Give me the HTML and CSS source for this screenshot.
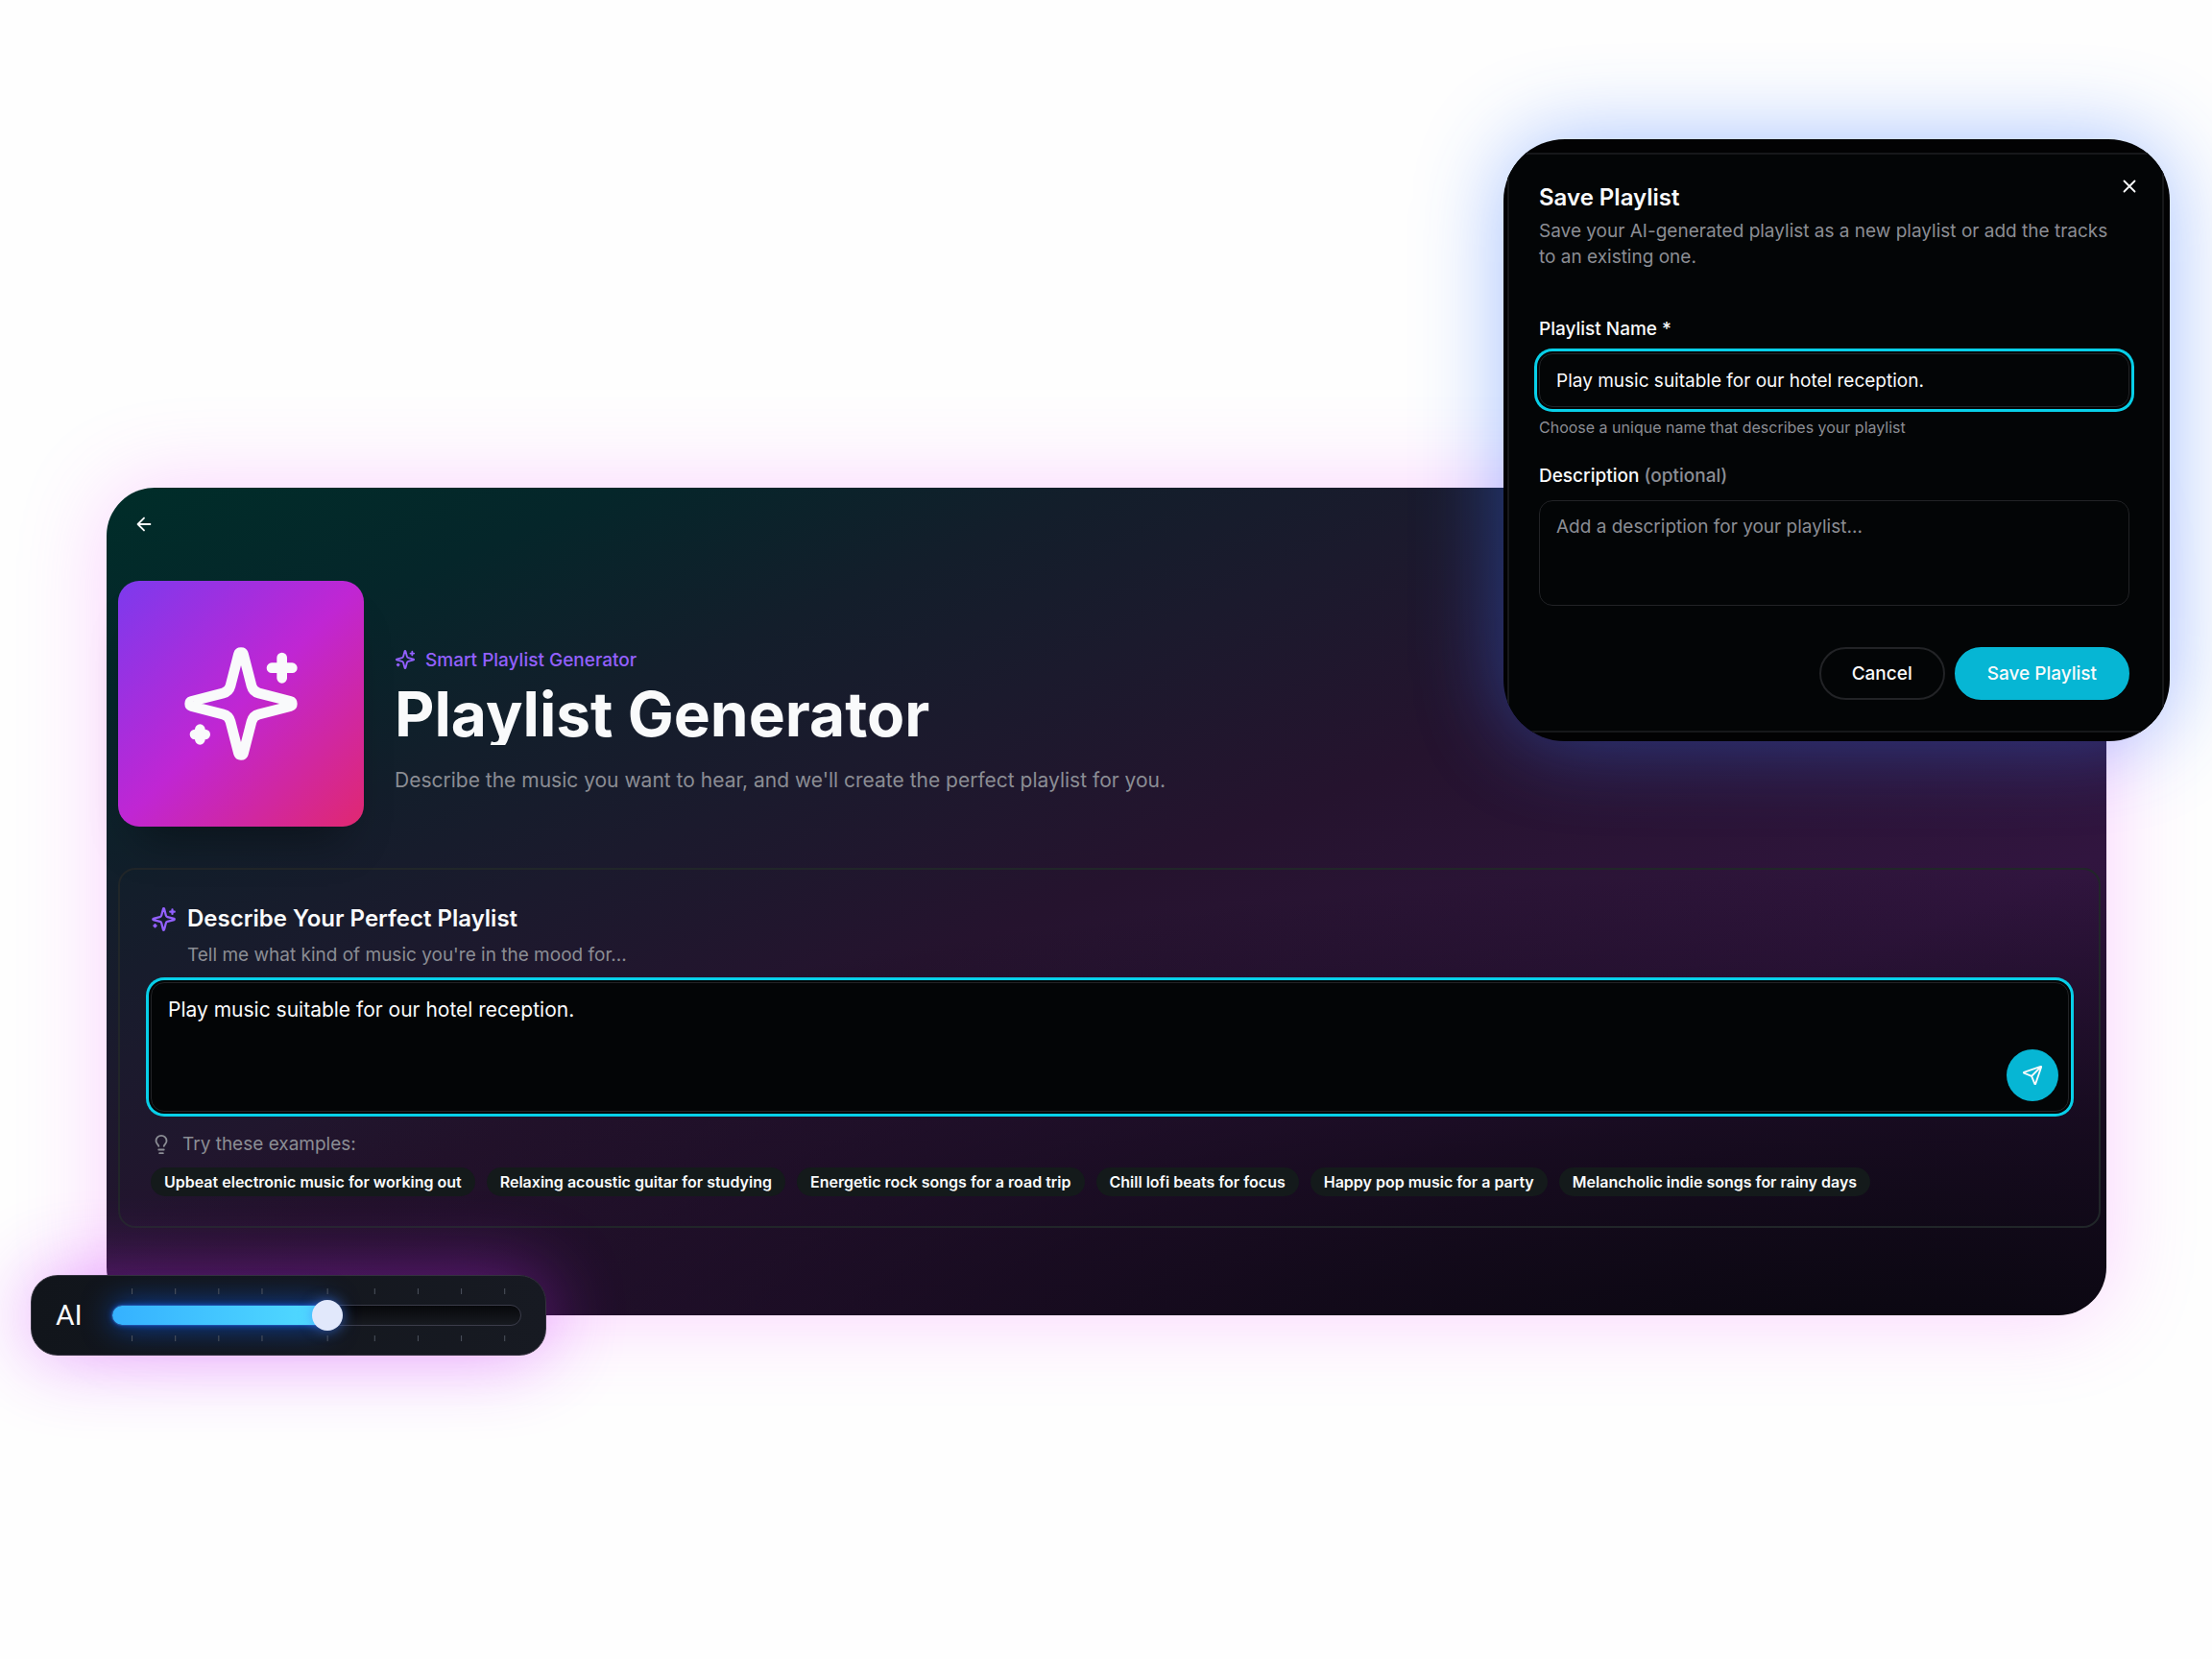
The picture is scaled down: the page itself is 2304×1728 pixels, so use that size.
FILE: index.html
```
<!DOCTYPE html>
<html lang="en">
<head>
    <meta charset="UTF-8">
    <meta name="viewport" content="width=device-width, initial-scale=1.0">
    <title>Playlist Generator</title>
    <link rel="stylesheet" href="styles.css">
</head>
<body>
    <!-- shared icons -->
    <svg class="sprite" aria-hidden="true">
        <symbol id="sparkles" viewBox="0 0 24 24">
            <path d="M9.937 15.5A2 2 0 0 0 8.5 14.063l-6.135-1.582a.5.5 0 0 1 0-.962L8.5 9.936A2 2 0 0 0 9.937 8.5l1.582-6.135a.5.5 0 0 1 .963 0L14.063 8.5A2 2 0 0 0 15.5 9.937l6.135 1.581a.5.5 0 0 1 0 .964L15.5 14.063a2 2 0 0 0-1.437 1.437l-1.582 6.135a.5.5 0 0 1-.963 0z"/>
            <path d="M20 3v4M22 5h-4M4 17v2M5 18H3"/>
        </symbol>
    </svg>

    <div class="stage">
        <main class="panel">
            <button type="button" class="back" aria-label="Back">
                <svg class="icon" viewBox="0 0 24 24"><path d="m12 19-7-7 7-7M19 12H5"/></svg>
            </button>

            <header class="hero">
                <div class="cover">
                    <svg class="icon"><use href="#sparkles"/></svg>
                </div>
                <div class="hero-text">
                    <div class="eyebrow">
                        <svg class="icon"><use href="#sparkles"/></svg>
                        <span>Smart Playlist Generator</span>
                    </div>
                    <h1>Playlist Generator</h1>
                    <p>Describe the music you want to hear, and we'll create the perfect playlist for you.</p>
                </div>
            </header>

            <section class="card">
                <div class="card-head">
                    <svg class="icon"><use href="#sparkles"/></svg>
                    <h2><label for="prompt">Describe Your Perfect Playlist</label></h2>
                </div>
                <p class="card-sub">Tell me what kind of music you're in the mood for...</p>

                <div class="prompt-box">
                    <textarea id="prompt" class="field focused">Play music suitable for our hotel reception.</textarea>
                    <button type="button" class="send" aria-label="Send">
                        <svg class="icon" viewBox="0 0 24 24"><path d="M14.536 21.686a.5.5 0 0 0 .937-.024l6.5-19a.496.496 0 0 0-.635-.635l-19 6.5a.5.5 0 0 0-.024.937l7.93 3.18a2 2 0 0 1 1.112 1.11zM21.854 2.147l-10.94 10.939"/></svg>
                    </button>
                </div>

                <div class="hint-row">
                    <svg class="icon" viewBox="0 0 24 24"><path d="M15 14c.2-1 .7-1.7 1.5-2.5 1-.9 1.5-2.2 1.5-3.5A6 6 0 0 0 6 8c0 1 .2 2.2 1.5 3.5.7.7 1.3 1.5 1.5 2.5M9 18h6M10 22h4"/></svg>
                    <span>Try these examples:</span>
                </div>
                <div class="chips">
                    <button type="button">Upbeat electronic music for working out</button>
                    <button type="button">Relaxing acoustic guitar for studying</button>
                    <button type="button">Energetic rock songs for a road trip</button>
                    <button type="button">Chill lofi beats for focus</button>
                    <button type="button">Happy pop music for a party</button>
                    <button type="button">Melancholic indie songs for rainy days</button>
                </div>
            </section>
        </main>

        <div class="dialog" role="dialog" aria-labelledby="dialogTitle">
            <form class="dialog-body">
                <button type="button" class="close" aria-label="Close">
                    <svg class="icon" viewBox="0 0 24 24"><path d="M18 6 6 18M6 6l12 12"/></svg>
                </button>
                <h2 id="dialogTitle">Save Playlist</h2>
                <p class="dialog-text">Save your AI-generated playlist as a new playlist or add the tracks to an existing one.</p>

                <label for="name">Playlist Name *</label>
                <input type="text" id="name" class="field focused" value="Play music suitable for our hotel reception.">
                <p class="help">Choose a unique name that describes your playlist</p>

                <label for="description">Description <span>(optional)</span></label>
                <textarea id="description" class="field" placeholder="Add a description for your playlist..."></textarea>

                <div class="actions">
                    <button type="button" class="btn">Cancel</button>
                    <button type="submit" class="btn primary">Save Playlist</button>
                </div>
            </form>
        </div>

        <div class="ai-level">
            <label for="level">AI</label>
            <div class="slider">
                <svg class="ticks" viewBox="0 0 426 56" preserveAspectRatio="none">
                    <path d="M21.500 0v6M66.500 0v6M111.500 0v6M156.500 0v6M224.500 0v6M273.500 0v6M318.500 0v6M363.500 0v6M408.500 0v6"/>
                    <path d="M21.500 49v6M66.500 49v6M111.500 49v6M156.500 49v6M224.500 49v6M273.500 49v6M318.500 49v6M363.500 49v6M408.500 49v6"/>
                </svg>
                <div class="track"><div class="fill" style="width: 53%"></div></div>
                <input type="range" id="level" min="0" max="100" value="53">
            </div>
        </div>
    </div>
</body>
</html>
```
FILE: styles.css
```
:root {
    --black: #030506;
    --cyan: #06b6d4;
    --ring: #08cfe8;
    --violet: #9360ff;
    --text: #f9fafb;
    --muted: #8b8d94;
    --line: #222326;
}
* {
    box-sizing: border-box;
}
body {
    margin: 0;
    background: #fefefe;
    color: var(--text);
    font-family: Inter, "Liberation Sans", sans-serif;
    font-size: 19px;
    line-height: 27px;
}
h1, h2, p {
    margin: 0;
}
button, input, textarea {
    font: inherit;
    color: inherit;
}
button {
    padding: 0;
    border: none;
    background: none;
    cursor: pointer;
}
.sprite {
    position: absolute;
    width: 0;
    height: 0;
}
.icon {
    display: block;
    flex: none;
    width: 22px;
    height: 22px;
    fill: none;
    stroke: currentColor;
    stroke-width: 2;
    stroke-linecap: round;
    stroke-linejoin: round;
}
.stage {
    position: relative;
    min-height: 100vh;
    padding: 508px 110px 0 111px;
    overflow: hidden;
}

/* main panel */
.panel {
    padding: 11px 6px 91px 12px;
    border-radius: 50px;
    background:
        radial-gradient(ellipse 95% 62% at 90% 108%, rgba(9, 7, 15, 0.95) 10%, rgba(14, 8, 20, 0.7) 50%, rgba(20, 10, 30, 0)),
        linear-gradient(to bottom right, #002d29 0%, #05262a 13%, #131e2b 25%, #1b1a2d 35%, #25132e 49%, #31153f 72%, #241033 100%);
    box-shadow: 0 0 90px rgba(240, 70, 255, 0.25);
}
.back {
    display: flex;
    align-items: center;
    justify-content: center;
    width: 54px;
    height: 54px;
    margin-bottom: 32px;
}
.hero {
    display: flex;
    align-items: center;
    gap: 32px;
    margin-bottom: 43px;
}
.cover {
    display: flex;
    align-items: center;
    justify-content: center;
    width: 256px;
    height: 256px;
    border-radius: 22px;
    background: linear-gradient(135deg, #7c3aed, #c026d3 50%, #e02870);
    box-shadow: 0 32px 44px -22px rgba(0, 0, 0, 0.4);
}
.cover .icon {
    width: 128px;
    height: 128px;
}
.hero-text {
    padding-top: 36px;
}
.eyebrow {
    display: flex;
    align-items: center;
    gap: 10px;
    margin-bottom: 11px;
    color: var(--violet);
    font-weight: 500;
}
/* the box is shorter than the descenders on purpose */
h1 {
    overflow: hidden;
    font-size: 64px;
    line-height: 64px;
    font-weight: 700;
}
.hero-text p {
    margin-top: 21px;
    font-size: 21px;
    line-height: 32px;
    color: var(--muted);
}
.card {
    padding: 35px 31px 31px 32px;
    border: 2px solid #212629;
    border-radius: 18px;
}
.card-head {
    display: flex;
    align-items: center;
    gap: 11px;
}
.card-head .icon {
    width: 27px;
    height: 27px;
    color: var(--violet);
}
h2 {
    font-size: 24px;
    line-height: 32px;
    font-weight: 600;
}
.card-sub {
    margin: 8px 0 15px 38px;
    color: var(--muted);
}

/* fields */
.field {
    display: block;
    width: 100%;
    padding: 13px 17px;
    border: 1px solid var(--line);
    border-radius: 14px;
    background: var(--black);
    outline: none;
    resize: none;
}
.field::placeholder {
    color: var(--muted);
    opacity: 1;
}
.field.focused {
    box-shadow: 0 0 0 2px var(--black), 0 0 0 5px var(--ring);
}
.prompt-box {
    position: relative;
}
#prompt {
    height: 135px;
    font-size: 21px;
    line-height: 30px;
}
.send {
    position: absolute;
    right: 11px;
    bottom: 11px;
    display: flex;
    align-items: center;
    justify-content: center;
    width: 54px;
    height: 54px;
    border-radius: 50%;
    background: var(--cyan);
}
.hint-row {
    display: flex;
    align-items: center;
    gap: 11px;
    margin: 20px 0 11px;
    color: var(--muted);
}
.chips {
    display: flex;
    flex-wrap: wrap;
    gap: 12px;
}
.chips button {
    padding: 0 14px;
    border-radius: 15px;
    background: #141a1b;
    font-size: 16px;
    line-height: 30px;
    font-weight: 600;
}

/* save dialog */
.dialog {
    position: absolute;
    top: 145px;
    right: 44px;
    width: 694px;
    padding: 14px 6px 9px 4px;
    border-radius: 64px;
    overflow: hidden;
    background: #020203;
    box-shadow: 0 0 90px rgba(50, 115, 255, 0.45);
}
.dialog-body {
    position: relative;
    padding: 33px 34px 32px 31px;
    border: 2px solid #17181a;
    background: var(--black);
}
.dialog h2 {
    line-height: 24px;
}
.dialog-text {
    margin: 9px 0 48px;
    color: var(--muted);
}
.close {
    position: absolute;
    top: 22px;
    right: 23px;
}
.dialog label {
    display: block;
    margin-bottom: 12px;
    font-weight: 500;
}
.dialog label span {
    color: var(--muted);
}
#name {
    height: 56px;
}
.help {
    margin: 10px 0 26px;
    font-size: 16px;
    line-height: 22px;
    color: var(--muted);
}
#description {
    height: 110px;
}
.actions {
    display: flex;
    justify-content: flex-end;
    gap: 10px;
    margin-top: 43px;
}
.btn {
    height: 55px;
    padding: 0 32px;
    border: 2px solid var(--line);
    border-radius: 28px;
    font-weight: 500;
}
.btn.primary {
    border-color: var(--cyan);
    background: var(--cyan);
}

/* ai level */
.ai-level {
    position: absolute;
    top: 1328px;
    left: 32px;
    display: flex;
    align-items: center;
    gap: 30px;
    width: 537px;
    height: 84px;
    padding: 0 25px;
    border: 1px solid #34313f;
    border-radius: 28px;
    background: linear-gradient(to right, #11151b, #171a22);
    box-shadow: 0 0 80px rgba(200, 40, 250, 0.45);
}
.ai-level label {
    font-family: Roboto, "Liberation Sans", sans-serif;
    font-size: 30px;
    line-height: 36px;
}
.slider {
    position: relative;
    flex: 1;
}
.ticks {
    position: absolute;
    top: -17px;
    left: 0;
    width: 100%;
    height: 56px;
    stroke: #4d535e;
    stroke-width: 1;
}
.track {
    height: 22px;
    border: 1px solid #3b3c4a;
    border-radius: 11px;
    background: linear-gradient(#07080b, #171a20);
}
.fill {
    height: 20px;
    border-radius: 10px;
    background: linear-gradient(to right, #35b1ff, #52dcff);
    box-shadow: 0 0 6px #0e5be0, 0 0 32px rgba(10, 100, 255, 0.75);
}
.slider input {
    position: absolute;
    top: -5px;
    left: 0;
    width: 100%;
    height: 32px;
    margin: 0;
    background: none;
    appearance: none;
}
.slider input::-webkit-slider-thumb {
    width: 32px;
    height: 32px;
    border-radius: 50%;
    background: #e1e8fb;
    box-shadow: 0 0 14px rgba(70, 130, 255, 0.6);
    appearance: none;
}
```
